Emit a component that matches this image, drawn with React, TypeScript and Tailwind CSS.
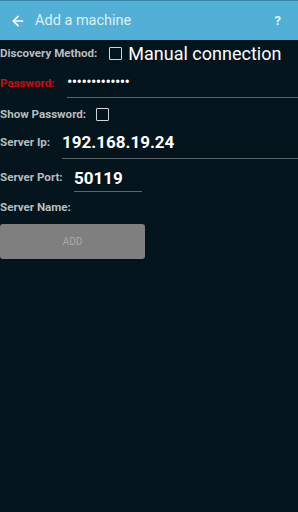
import { ArrowLeft } from "lucide-react";

function Box({ className = "" }: { className?: string }) {
  return <span className={`inline-block w-[13px] h-[13px] border border-[#cfd4d6] rounded-[1px] ${className}`} />;
}

export default function App() {
  return (
    <div className="w-[298px] h-[512px] bg-[#03141c] font-['Roboto',sans-serif] overflow-hidden">
      {/* Toolbar */}
      <div className="h-[40px] bg-[#52afd5] border-t border-[#3a86a8] flex items-center">
        <ArrowLeft className="ml-[10px] w-[16px] h-[16px] text-white" strokeWidth={2.5} />
        <span className="ml-[9px] text-[14.5px] text-[#dff0f7]">Add a machine</span>
        <span className="ml-auto mr-[17px] text-[13px] font-bold text-[#e6f3f8]">?</span>
      </div>

      {/* Discovery method */}
      <div className="h-[27px] flex items-center">
        <span className="text-[11.6px] font-bold text-[#b9bdbf]">Discovery Method:</span>
        <Box className="ml-[12px]" />
        <span className="ml-[6px] text-[18px] text-white leading-none">Manual connection</span>
      </div>

      {/* Password */}
      <div className="h-[31px] flex items-end">
        <span className="text-[11.6px] font-bold text-[#d10a0a] w-[67px] pb-[6px]">Password:</span>
        <div className="flex-1 h-full border-b border-[#5c6669] flex items-center pb-[1px]">
          <span className="text-[16px] text-white tracking-[-0.6px] leading-none">•••••••••••••</span>
        </div>
      </div>

      {/* Show password */}
      <div className="h-[33px] flex items-center">
        <span className="text-[11.6px] font-bold text-[#b9bdbf]">Show Password:</span>
        <Box className="ml-[10px]" />
      </div>

      {/* Server Ip */}
      <div className="h-[30px] flex items-end -mt-[2px]">
        <span className="text-[11.6px] font-bold text-[#b9bdbf] w-[62px] pb-[8px]">Server Ip:</span>
        <div className="flex-1 h-full border-b border-[#5c6669] flex items-center pb-[2px]">
          <span className="text-[17px] font-bold text-white leading-none">192.168.19.24</span>
        </div>
      </div>

      {/* Server Port */}
      <div className="h-[33px] flex items-end">
        <span className="text-[11.6px] font-bold text-[#b9bdbf] w-[74px] pb-[6px]">Server Port:</span>
        <div className="w-[68px] h-full border-b border-[#5c6669] flex items-center pt-[6px]">
          <span className="text-[17px] font-bold text-white leading-none">50119</span>
        </div>
      </div>

      {/* Server Name */}
      <div className="h-[32px] flex items-center">
        <span className="text-[11.6px] font-bold text-[#b9bdbf]">Server Name:</span>
      </div>

      <button className="w-[145px] h-[35px] bg-[#7f7f7f] rounded-[3px] text-[10px] text-[#a9a9a9] flex items-center justify-center">
        ADD
      </button>
    </div>
  );
}
